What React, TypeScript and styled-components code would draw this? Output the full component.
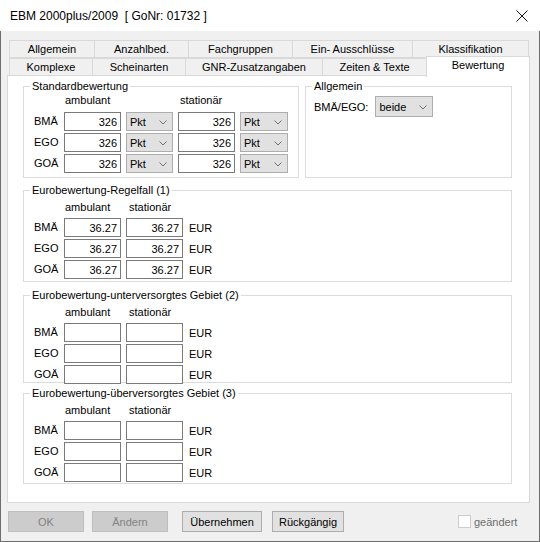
import React from 'react';
import styled, { createGlobalStyle } from 'styled-components';

const GlobalStyle = createGlobalStyle`
  html, body {
    margin: 0;
    padding: 0;
    background: #ffffff;
  }
  body {
    font-family: "Liberation Sans", Arial, sans-serif;
    font-size: 11px;
    color: #000;
  }
`;

const Window = styled.div`
  width: 540px;
  height: 542px;
  display: flex;
  flex-direction: column;
  background: #fff;
`;

const TitleBar = styled.div`
  height: 31px;
  flex: none;
  display: flex;
  align-items: center;
  justify-content: space-between;
  padding: 0 10px 0 10px;
  background: #fff;
  font-size: 12px;
  white-space: pre;
`;

const CloseButton = styled.div`
  width: 14px;
  height: 14px;
  display: flex;
  align-items: center;
  justify-content: center;
  margin-right: 1px;
`;

const Body = styled.div`
  flex: 1;
  background: #f0f0f0;
  border: 1px solid #6e6e6e;
  border-top: none;
  padding: 9px 0 0 6px;
  display: flex;
  flex-direction: column;
`;

const TabStrip = styled.div`
  margin-left: 2px;
  display: flex;
  flex-direction: column;
`;

const TabRow = styled.div`
  display: flex;
  height: 18px;
  align-items: flex-end;
`;

const Tab = styled.div<{ $w: number; $active?: boolean }>`
  position: relative;
  box-sizing: border-box;
  width: ${(p) => p.$w}px;
  height: ${(p) => (p.$active ? 21 : 18)}px;
  margin-left: -1px;
  margin-bottom: ${(p) => (p.$active ? -1 : 0)}px;
  border: 1px solid #d9d9d9;
  border-bottom: ${(p) => (p.$active ? 'none' : '1px solid #d9d9d9')};
  background: ${(p) => (p.$active ? '#ffffff' : '#f0f0f0')};
  z-index: ${(p) => (p.$active ? 2 : 1)};
  display: flex;
  justify-content: center;
  align-items: ${(p) => (p.$active ? 'flex-start' : 'center')};
  padding-top: ${(p) => (p.$active ? 2 : 0)}px;
  &:first-child {
    margin-left: 0;
  }
`;

const Panel = styled.div`
  position: relative;
  z-index: 0;
  box-sizing: border-box;
  width: 523px;
  height: 428px;
  margin-top: -1px;
  background: #fff;
  border: 1px solid #d9d9d9;
  padding: 10px 0 0 15px;
  display: flex;
  flex-direction: column;
`;

const TopRow = styled.div`
  display: flex;
  gap: 6px;
`;

const Group = styled.div<{ $w: number; $h: number; $mt?: number }>`
  position: relative;
  box-sizing: border-box;
  width: ${(p) => p.$w}px;
  height: ${(p) => p.$h}px;
  margin-top: ${(p) => p.$mt ?? 0}px;
  border: 1px solid #dcdcdc;
  flex: none;
`;

const Legend = styled.span`
  position: absolute;
  top: -7px;
  left: 6px;
  padding: 0 2px;
  background: #fff;
  line-height: 13px;
  white-space: nowrap;
`;

const GroupInner = styled.div<{ $pt: number }>`
  padding: ${(p) => p.$pt}px 0 0 10px;
  display: flex;
  flex-direction: column;
  gap: 2px;
`;

const Grid = styled.div<{ $cols: string }>`
  display: grid;
  grid-template-columns: ${(p) => p.$cols};
  column-gap: 5px;
  align-items: center;
`;

const HeaderGrid = styled(Grid)<{ $mb: number }>`
  margin-bottom: ${(p) => p.$mb}px;
  line-height: 13px;
`;

const ColHead = styled.span<{ $pl?: number; $col: number }>`
  grid-column: ${(p) => p.$col};
  padding-left: ${(p) => p.$pl ?? 0}px;
  white-space: nowrap;
`;

const RowLabel = styled.span`
  line-height: 13px;
`;

const NumField = styled.div`
  box-sizing: border-box;
  height: 19px;
  background: #fff;
  border: 1px solid #7a7a7a;
  display: flex;
  align-items: center;
  justify-content: flex-end;
  padding-right: 3px;
`;

const Combo = styled.div<{ $w?: number; $h?: number }>`
  box-sizing: border-box;
  width: ${(p) => (p.$w ? `${p.$w}px` : 'auto')};
  height: ${(p) => p.$h ?? 19}px;
  background: #e1e1e1;
  border: 1px solid #adadad;
  display: flex;
  align-items: center;
  justify-content: space-between;
  padding: 1px 5px 0 3px;
`;

const Unit = styled.span`
  padding-left: 1px;
`;

const AllgRow = styled.div`
  padding: 9px 0 0 8px;
  display: flex;
  align-items: center;
  gap: 7px;
`;

const ButtonBar = styled.div`
  display: flex;
  align-items: center;
  margin-top: 8px;
`;

const Button = styled.div<{ $w: number; $ml: number; $disabled?: boolean }>`
  box-sizing: border-box;
  width: ${(p) => p.$w}px;
  height: 21px;
  margin-left: ${(p) => p.$ml}px;
  background: ${(p) => (p.$disabled ? '#cccccc' : '#e1e1e1')};
  border: 1px solid ${(p) => (p.$disabled ? '#bfbfbf' : '#adadad')};
  color: ${(p) => (p.$disabled ? '#838383' : '#000')};
  display: flex;
  align-items: center;
  justify-content: center;
`;

const CheckWrap = styled.div`
  margin-left: 114px;
  display: flex;
  align-items: center;
  gap: 3px;
  color: #6d6d6d;
`;

const CheckBox = styled.div`
  box-sizing: border-box;
  width: 13px;
  height: 13px;
  border: 1px solid #cccccc;
  background: #fff;
`;

const Chevron = () => (
  <svg width="8" height="5" viewBox="0 0 8 5">
    <polyline points="0.5,0.5 4,4 7.5,0.5" fill="none" stroke="#707070" strokeWidth="1" />
  </svg>
);

const row1 = [
  { t: 'Allgemein', w: 86 },
  { t: 'Anzahlbed.', w: 95 },
  { t: 'Fachgruppen', w: 105 },
  { t: 'Ein- Ausschlüsse', w: 121 },
  { t: 'Klassifikation', w: 117 },
];

const row2 = [
  { t: 'Komplexe', w: 84 },
  { t: 'Scheinarten', w: 94 },
  { t: 'GNR-Zusatzangaben', w: 138 },
  { t: 'Zeiten & Texte', w: 105 },
  { t: 'Bewertung', w: 104, active: true },
];

const rows = ['BMÄ', 'EGO', 'GOÄ'];

const stdCols = '25px 57px 47px 57px 48px';
const euroCols = '25px 57px 57px 30px';

function EuroGroup({ title, h, mt, value }: { title: string; h: number; mt: number; value?: string }) {
  return (
    <Group $w={489} $h={h} $mt={mt}>
      <Legend>{title}</Legend>
      <GroupInner $pt={10}>
        <HeaderGrid $cols={euroCols} $mb={2}>
          <ColHead $col={2} $pl={1}>ambulant</ColHead>
          <ColHead $col={3} $pl={3}>stationär</ColHead>
        </HeaderGrid>
        {rows.map((r) => (
          <Grid key={r} $cols={euroCols}>
            <RowLabel>{r}</RowLabel>
            <NumField>{value}</NumField>
            <NumField>{value}</NumField>
            <Unit>EUR</Unit>
          </Grid>
        ))}
      </GroupInner>
    </Group>
  );
}

export default function App() {
  return (
    <>
      <GlobalStyle />
      <Window>
        <TitleBar>
          <span>EBM 2000plus/2009  [ GoNr: 01732 ]</span>
          <CloseButton>
            <svg width="12" height="12" viewBox="0 0 12 12">
              <path d="M0.5 0.5 L11.5 11.5 M11.5 0.5 L0.5 11.5" stroke="#111" strokeWidth="1" />
            </svg>
          </CloseButton>
        </TitleBar>
        <Body>
          <TabStrip>
            <TabRow>
              {row1.map((t) => (
                <Tab key={t.t} $w={t.w}>{t.t}</Tab>
              ))}
            </TabRow>
            <TabRow>
              {row2.map((t) => (
                <Tab key={t.t} $w={t.w} $active={t.active}>{t.t}</Tab>
              ))}
            </TabRow>
          </TabStrip>
          <Panel>
            <TopRow>
              <Group $w={276} $h={92}>
                <Legend>Standardbewertung</Legend>
                <GroupInner $pt={7}>
                  <HeaderGrid $cols={stdCols} $mb={3}>
                    <ColHead $col={2} $pl={1}>ambulant</ColHead>
                    <ColHead $col={4} $pl={2}>stationär</ColHead>
                  </HeaderGrid>
                  {rows.map((r) => (
                    <Grid key={r} $cols={stdCols}>
                      <RowLabel>{r}</RowLabel>
                      <NumField>326</NumField>
                      <Combo>
                        <span>Pkt</span>
                        <Chevron />
                      </Combo>
                      <NumField>326</NumField>
                      <Combo>
                        <span>Pkt</span>
                        <Chevron />
                      </Combo>
                    </Grid>
                  ))}
                </GroupInner>
              </Group>
              <Group $w={207} $h={92}>
                <Legend>Allgemein</Legend>
                <AllgRow>
                  <span>BMÄ/EGO:</span>
                  <Combo $w={58} $h={21}>
                    <span>beide</span>
                    <Chevron />
                  </Combo>
                </AllgRow>
              </Group>
            </TopRow>
            <EuroGroup title="Eurobewertung-Regelfall (1)" h={92} mt={12} value="36.27" />
            <EuroGroup title="Eurobewertung-unterversorgtes Gebiet (2)" h={88} mt={13} />
            <EuroGroup title="Eurobewertung-überversorgtes Gebiet (3)" h={91} mt={10} />
          </Panel>
          <ButtonBar>
            <Button $w={76} $ml={1} $disabled>OK</Button>
            <Button $w={76} $ml={8} $disabled>Ändern</Button>
            <Button $w={80} $ml={14}>Übernehmen</Button>
            <Button $w={72} $ml={10}>Rückgängig</Button>
            <CheckWrap>
              <CheckBox />
              <span>geändert</span>
            </CheckWrap>
          </ButtonBar>
        </Body>
      </Window>
    </>
  );
}
